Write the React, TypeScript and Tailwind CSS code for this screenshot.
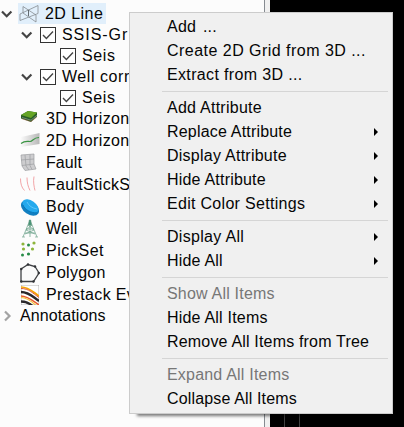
import type { ReactNode } from 'react';

function Chevron({ right = false }: { right?: boolean }) {
  return (
    <svg className="h-3 w-3 shrink-0" viewBox="0 0 12 12" fill="none" strokeWidth="2.2">
      {right ? <path d="M4 1.5 8.5 6 4 10.5" stroke="#a3a3a3" /> : <path d="M1 3.5 5.7 8.2 10.4 3.5" stroke="#444" />}
    </svg>
  );
}

function Check() {
  return (
    <svg className="h-4 w-4 shrink-0" viewBox="0 0 16 16" fill="none">
      <rect x=".5" y=".5" width="15" height="15" fill="#fff" stroke="#333" />
      <path d="m3 8 3.4 3.4L13 4.6" stroke="#444" strokeWidth="1.4" />
    </svg>
  );
}

function Icon({ children }: { children: ReactNode }) {
  return (
    <svg className="h-5 w-5 shrink-0" viewBox="0 0 20 20" fill="none">
      {children}
    </svg>
  );
}

const lineIcon = (
  <Icon>
    <path d="M4 2.5 17 11v7L4 9zM1 10l18-8.5v8L1 16.5z" stroke="#858b90" strokeWidth=".8" />
    <path d="M9.5 6v6" stroke="#555b60" strokeWidth=".9" />
  </Icon>
);

const surveys = [
  { label: 'SSIS-Gr', track: 'tracking-[0.95px]' },
  { label: 'Well corr', track: 'tracking-[0.55px]' },
];

const nodes = [
  {
    label: '3D Horizon', track: 'tracking-[0.35px]',
    icon: <><path d="m1 6 7-4 9 1.5v4L11 13 1 9.5z" fill="#285d24" /><path d="m1 6 7-4 9 1.5L11 9z" fill="#65a425" /><path d="m2 8.5 9 2.7 6-5" stroke="#83988a" strokeWidth=".8" /><path d="m2 9.8 9 2.7 6-4.5" stroke="#bd5740" strokeWidth=".4" /></>,
  },
  {
    label: '2D Horizon', track: 'tracking-[0.35px]',
    icon: <><defs><linearGradient id="sheet"><stop stopColor="#fafafa" /><stop offset="1" stopColor="#b7b7b7" /></linearGradient></defs><path d="m1 6 18.5-4v11L1 16z" fill="url(#sheet)" /><path d="M1 12.5c4-3 6-2 9-2s3-4 9-4" stroke="#399442" strokeWidth="1.2" /></>,
  },
  {
    label: 'Fault', track: 'tracking-[0.1px]',
    icon: <><path d="m1 2 13-1v10l2 5-11 1.5L2 13z" fill="#cdcdcf" /><path d="m1 2 13-1v10l2 5-11 1.5L2 13zM5 2 6 13l3 4M10 1.5v11l2 4M1 7l13-1M2 12.5l12-1.5" stroke="#9c9da0" strokeWidth=".7" /></>,
  },
  {
    label: 'FaultStickS', track: 'tracking-[0.3px]',
    icon: <path d="M.5 3.5c0 5 1 9 4 12M7 2.5c0 5 1 9 3 13M14 1.5c-1 5 0 10 1 14" stroke="#f09a9d" strokeWidth=".9" />,
  },
  {
    label: 'Body', track: 'tracking-[0.5px]',
    icon: <><ellipse cx="10" cy="11" rx="10" ry="6.5" transform="rotate(35 10 11)" fill="#127fc1" /><ellipse cx="10.5" cy="9" rx="9" ry="5.3" transform="rotate(35 10.5 9)" fill="#24a9ed" /><path d="M3 8c2 5 8 8 14 8" stroke="#0877b9" /><path d="M7 5c2 4 5 6 10 7" stroke="#6bcdfa" strokeWidth=".8" /></>,
  },
  {
    label: 'Well', track: 'tracking-[0.2px]',
    icon: <><path d="M10 1 3 18M10 1l7 17M10 1v17M8 6h4M6 10h8M5 14h10M8 6l6 5-9 4M12 6l-6 5 9 4" stroke="#6da38c" strokeWidth=".75" /><path d="M9.3 1h1.4l.6 5H8.7zM2 18h3M15 18h3" fill="#439175" stroke="#5f987e" strokeWidth=".6" /></>,
  },
  {
    label: 'PickSet', track: 'tracking-[0.55px]',
    icon: <><g fill="#8db53b"><circle cx="3" cy="3" r="1.6" /><circle cx="14" cy="2" r="1.6" /><circle cx="3.5" cy="8" r="1.6" /><circle cx="12.5" cy="8" r="1.6" /></g><g fill="#278c48"><circle cx="8.5" cy="4" r="1.5" /><circle cx="8.5" cy="13" r="1.6" /><circle cx="2.5" cy="14" r="1.5" /></g></>,
  },
  {
    label: 'Polygon', track: 'tracking-[0.25px]',
    icon: <><path d="m1 6 7-4.5 7 2 4 6.5-5.5 8.5H1z" fill="#fafafa" stroke="#3f4144" strokeWidth="1.3" /><g fill="#303236"><circle cx="1.3" cy="6" r="1.2" /><circle cx="8" cy="1.5" r="1.2" /><circle cx="15" cy="3.5" r="1.2" /><circle cx="18.7" cy="10" r="1.2" /><circle cx="13.5" cy="18.5" r="1.2" /><circle cx="1.3" cy="18.5" r="1.2" /></g></>,
  },
  {
    label: 'Prestack Ev', track: 'tracking-[0.35px]',
    icon: <svg x="1" y="0" width="18" height="20" viewBox="0 0 18 20"><path d="M0 0h18v20H0z" fill="#fff" stroke="#999" strokeWidth=".7" /><path d="M0 2c8 0 12 5 18 9" stroke="#f5a400" strokeWidth="1.7" /><path d="M0 3.5c8 0 12 5 18 9" stroke="#df5735" strokeWidth="1" /><path d="M0 7c8 0 12 5 18 9" stroke="#29272a" strokeWidth="2.4" /><path d="M0 11c7 0 12 5 18 9" stroke="#e85c2e" strokeWidth="1.5" /><path d="M0 12.5c6 0 11 4 16 9" stroke="#f0c43b" strokeWidth="1.2" /><path d="M0 16.5c5 0 9 2 12 5" stroke="#29272a" strokeWidth="2.4" /></svg>,
  },
];

type MenuItem = { label: string; track: string; sub?: boolean; disabled?: boolean };

const groups: MenuItem[][] = [
  [
    { label: 'Add ...', track: 'tracking-[0.25px] [word-spacing:2px]' },
    { label: 'Create 2D Grid from 3D ...', track: 'tracking-[0.47px]' },
    { label: 'Extract from 3D ...', track: 'tracking-[0.35px]' },
  ],
  [
    { label: 'Add Attribute', track: 'tracking-[0.25px]' },
    { label: 'Replace Attribute', track: 'tracking-[0.19px]', sub: true },
    { label: 'Display Attribute', track: 'tracking-[0.25px]', sub: true },
    { label: 'Hide Attribute', track: 'tracking-[0.2px]', sub: true },
    { label: 'Edit Color Settings', track: 'tracking-[0.3px]', sub: true },
  ],
  [
    { label: 'Display All', track: 'tracking-[0.3px]', sub: true },
    { label: 'Hide All', track: 'tracking-[0.2px]', sub: true },
  ],
  [
    { label: 'Show All Items', track: 'tracking-[0.2px]', disabled: true },
    { label: 'Hide All Items', track: 'tracking-[0.2px]' },
    { label: 'Remove All Items from Tree', track: 'tracking-[0.18px]' },
  ],
  [
    { label: 'Expand All Items', track: 'tracking-[0.2px]', disabled: true },
    { label: 'Collapse All Items', track: 'tracking-[0.15px]' },
  ],
];

export default function App() {
  return (
    <div className="relative flex h-[427px] w-[404px] overflow-hidden bg-black font-['Liberation_Sans',Arial,sans-serif] text-[16px] leading-5 text-[#050505]">
      <aside className="w-[265px] shrink-0 overflow-hidden border-r border-[#868b91] bg-[#fcfcfc] pt-[3px] whitespace-nowrap">
        <div className="flex h-[21px] items-center pl-[1px]">
          <Chevron />
          <div className="ml-[5px] flex h-[21px] items-center gap-1.5 bg-[#e1effb] pr-[3px] pl-[1px]">{lineIcon}<span className="tracking-[0.45px]">2D Line</span></div>
        </div>
        {surveys.map(({ label, track }) => (
          <div key={label}>
            <div className="flex h-[21px] items-center pl-[21px]"><Chevron /><span className="ml-[7px] flex"><Check /></span><span className={`ml-1.5 ${track}`}>{label}</span></div>
            <div className="flex h-[21px] items-center gap-1.5 pl-[60px]"><Check /><span className="tracking-[0.6px]">Seis</span></div>
          </div>
        ))}
        {nodes.map(({ label, track, icon }) => (
          <div key={label} className="flex h-[22px] items-center gap-1.5 pl-5"><Icon>{icon}</Icon><span className={track}>{label}</span></div>
        ))}
        <div className="flex h-[19px] items-center gap-[7px] pl-[1px]"><Chevron right /><span className="tracking-[0.1px]">Annotations</span></div>
      </aside>
      <div className="w-[5px] shrink-0 bg-[#f0f0f0]" />
      <main className="flex flex-1 items-end pl-3.5"><div className="h-[15px] w-4 border-x border-[#414141]" /></main>

      <div role="menu" className="absolute top-3 left-[129px] h-[402px] w-[264px] border border-[#cccccc] bg-[#f0f0f0] pt-[2px] whitespace-nowrap shadow-[5px_5px_3px_-3px_#00000088]">
        {groups.map((items, index) => (
          <div key={index}>
            {index > 0 && <div className="flex h-[9px] items-center pr-1 pl-8"><div className="h-px w-full bg-[#d5d5d5]" /></div>}
            {items.map((item) => (
              <div key={item.label} role="menuitem" className={`flex h-6 items-center justify-between pr-[14px] pl-[37px] ${item.disabled ? 'text-[#777777]' : ''}`}>
                <span className={item.track}>{item.label}</span>
                {item.sub && <svg className="h-2 w-1" viewBox="0 0 4 8"><path d="M0 0 4 4 0 8z" fill="#000" /></svg>}
              </div>
            ))}
          </div>
        ))}
      </div>
    </div>
  );
}
